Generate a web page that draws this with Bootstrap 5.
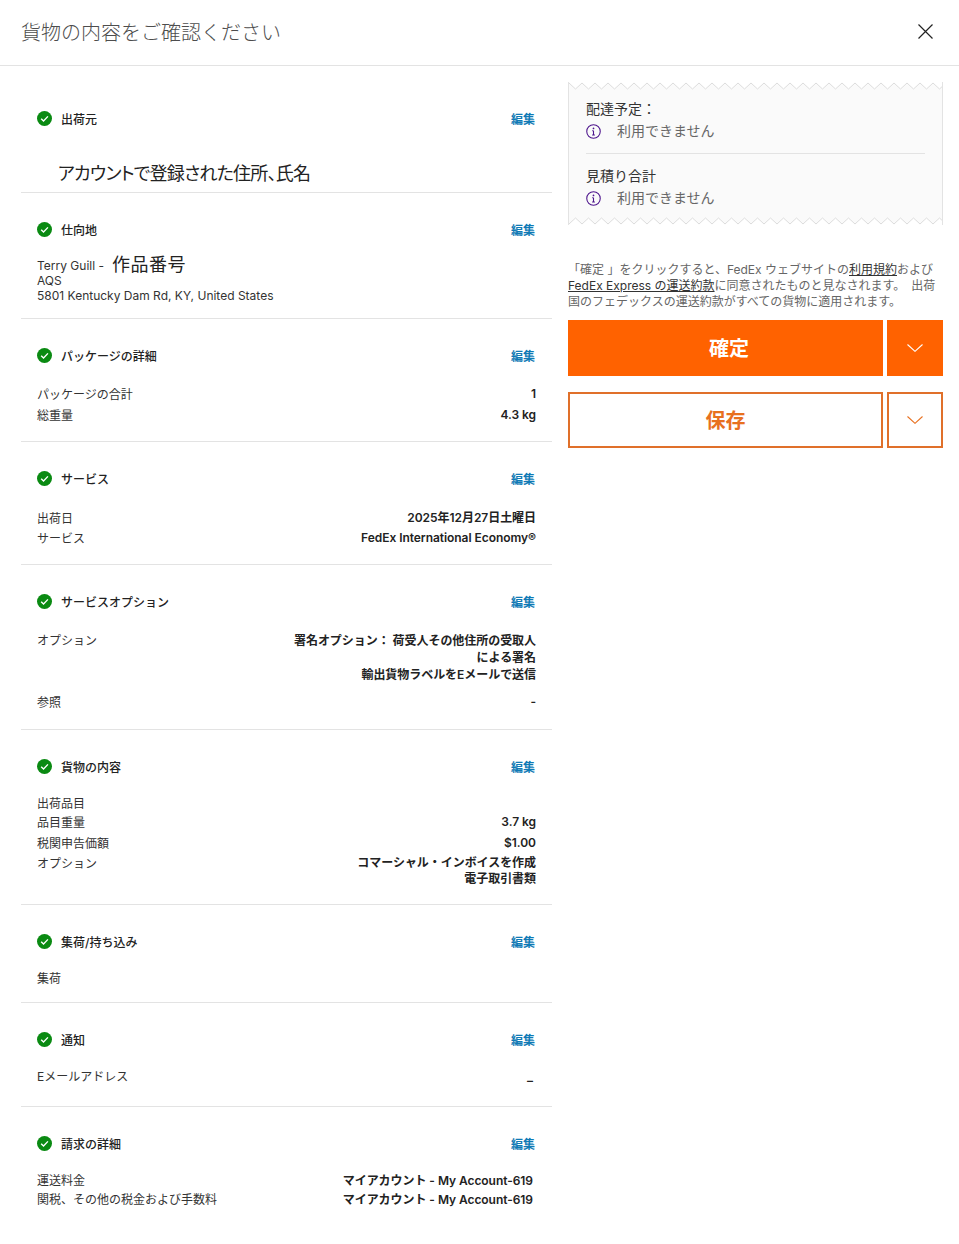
<!DOCTYPE html>
<html lang="ja">
<head>
<meta charset="utf-8">
<title>貨物の内容をご確認ください</title>
<link href="https://cdn.jsdelivr.net/npm/bootstrap@5.3.0/dist/css/bootstrap.min.css" rel="stylesheet">
<style>
body{font-family:Inter,"Noto Sans CJK JP",sans-serif;font-size:12px;color:#333;background:#fff;overflow:hidden}
.hdr{height:66px;padding:0 21px;border-bottom:1px solid #e3e3e3}
.hdr-title{font-size:20px;font-weight:300;color:#4d4d4d;line-height:28px;margin:0;padding-top:1px}
.x-btn{background:none;border:0;padding:0;line-height:0;margin-right:4px;margin-bottom:3px}
.main-wrap{padding:0 16px 0 21px;gap:16px}
.left-col{width:531px;flex:none}
.right-col{width:375px;flex:none;padding-top:16px}
.sec{border-bottom:1px solid #e3e3e3;padding:28px 16px 0}
.sec:first-child{padding-top:44px}
.sec:last-child{border-bottom:0}
.sec-head{height:20px;font-weight:500;color:#222;line-height:20px}
.chk{margin-top:-4px;margin-left:0;margin-right:9px}
.edit-link{color:#0f7ab5;font-weight:700;text-decoration:none;margin-right:1px}
.lbl{color:#333}
.val{color:#222;font-weight:600;text-align:right;letter-spacing:-.05px}
.rw{line-height:20px;min-height:20px}
.rw>.val{margin-top:-1px}
.rw>.val-flat{margin-top:0;padding-right:3px}
.rw2{margin-top:1px}
.rw-s{min-height:19px;height:19px}
.multi{line-height:17px;padding-top:1px}
.multi2{line-height:16px;padding-top:1px}
.note-big{font-family:"Noto Sans CJK JP",sans-serif;font-size:18px;line-height:24px;color:#222;font-weight:400;font-feature-settings:"palt";letter-spacing:-.75px}
.addr{font-size:12px;line-height:15px;color:#333}
.ov{font-family:"Noto Sans CJK JP",sans-serif;font-size:18px;letter-spacing:.5px;color:#222;line-height:15px;margin-left:8px;position:relative;top:1px}
.s1{height:127px}.s2{height:126px}.s3{height:123px}.s4{height:123px}.s5{height:165px}.s6{height:175px}.s7{height:98px}.s8{height:104px}
.b1{padding-top:12px;padding-left:21px}
.mt-a{margin-top:14px}.mt-b{margin-top:18px}.mt-c{margin-top:19px}.mt-d{margin-top:10px}.mt-e{margin-top:16px}
.receipt{background:#fafafa;border-left:1px solid #e3e3e3;border-right:1px solid #e3e3e3;width:375px}
.zig{display:block;width:373px;height:8px;background:#fafafa}
.rc-body{padding:8px 17px 8px}
.rc-h{font-size:14px;line-height:22px;color:#333}
.rc-v{font-size:14px;line-height:22px;color:#666;gap:16px}
.rc-hr{border-top:1px solid #e3e3e3;margin:11px 0 11px}
.terms{font-size:12px;line-height:16px;color:#666;margin:37px 0 10px}
.terms a{color:#333}
.act{gap:4px;height:56px}
.act+.act{margin-top:16px}
.btn-go,.btn-go-s{background:#ff6200;border:0;border-radius:0;color:#fff;font-weight:700;font-size:20px;height:56px;padding:0;line-height:1}
.btn-go{flex:1 1 auto;padding-left:7px;padding-top:1px}
.btn-go-s{width:56px;flex:none}
.btn-sv,.btn-sv-s{background:#fff;border:2px solid #e0702a;border-radius:0;color:#e8701f;font-weight:700;font-size:20px;height:56px;padding:0;line-height:1}
.btn-sv{flex:1 1 auto;padding-top:2px}
.btn-sv-s{width:56px;flex:none}
.btn-go:hover,.btn-go-s:hover{background:#ff6200;color:#fff}
.btn-sv:hover,.btn-sv-s:hover{background:#fff;color:#e8701f;border-color:#e0702a}
</style>
</head>
<body>
<svg width="0" height="0" class="position-absolute">
  <defs>
    <symbol id="ck" viewBox="0 0 14 14"><circle cx="7" cy="7" r="7" fill="#0a8a12"/><path d="M3.9 7.2 6.1 9.3 10.2 5" fill="none" stroke="#fff" stroke-width="1.3"/></symbol>
    <symbol id="inf" viewBox="0 0 14 14"><circle cx="7" cy="7" r="6.3" fill="none" stroke="#4d148c" stroke-width="1"/><path d="M7 6.2V10M5.8 6.3H7M5.7 10.2H8.3" fill="none" stroke="#4d148c" stroke-width="1"/><circle cx="7" cy="4.1" r=".8" fill="#4d148c"/></symbol>
    <symbol id="chv" viewBox="0 0 16 8"><path d="M.5.5 8 7.3 15.5.5" fill="none" stroke="currentColor" stroke-width="1.1"/></symbol>
    <pattern id="zigT" width="13" height="8" patternUnits="userSpaceOnUse"><path d="M0 0H13V1L6.5 7 0 1Z" fill="#fff"/><path d="M0 1 6.5 7 13 1" fill="none" stroke="#dcdcdc"/></pattern>
    <pattern id="zigB" width="13" height="8" patternUnits="userSpaceOnUse"><path d="M0 8H13V7L6.5 1 0 7Z" fill="#fff"/><path d="M0 7 6.5 1 13 7" fill="none" stroke="#dcdcdc"/></pattern>
  </defs>
</svg>
<header class="hdr d-flex align-items-center justify-content-between">
  <h1 class="hdr-title">貨物の内容をご確認ください</h1>
  <button class="x-btn" aria-label="閉じる" type="button"><svg width="17" height="17" viewBox="0 0 17 17"><path d="M1.5 1.5 15.5 15.5M15.5 1.5 1.5 15.5" stroke="#222" stroke-width="1.2" fill="none"/></svg></button>
</header>
<div class="main-wrap d-flex align-items-start">
  <div class="left-col">
    <section class="sec s1">
      <div class="sec-head d-flex align-items-center"><svg class="chk" width="15" height="15"><use href="#ck"/></svg><span>出荷元</span><a class="edit-link ms-auto" href="#">編集</a></div>
      <div class="note-big b1 mt-b">アカウントで登録された住所、氏名</div>
    </section>
    <section class="sec s2">
      <div class="sec-head d-flex align-items-center"><svg class="chk" width="15" height="15"><use href="#ck"/></svg><span>仕向地</span><a class="edit-link ms-auto" href="#">編集</a></div>
      <div class="addr mt-a">
        <div>Terry Guill -<span class="ov">作品番号</span></div>
        <div>AQS</div>
        <div>5801 Kentucky Dam Rd, KY, United States</div>
      </div>
    </section>
    <section class="sec s3">
      <div class="sec-head d-flex align-items-center"><svg class="chk" width="15" height="15"><use href="#ck"/></svg><span>パッケージの詳細</span><a class="edit-link ms-auto" href="#">編集</a></div>
      <div class="mt-b">
        <div class="rw d-flex justify-content-between"><span class="lbl">パッケージの合計</span><span class="val">1</span></div>
        <div class="rw rw2 d-flex justify-content-between"><span class="lbl">総重量</span><span class="val">4.3 kg</span></div>
      </div>
    </section>
    <section class="sec s4">
      <div class="sec-head d-flex align-items-center"><svg class="chk" width="15" height="15"><use href="#ck"/></svg><span>サービス</span><a class="edit-link ms-auto" href="#">編集</a></div>
      <div class="mt-c">
        <div class="rw d-flex justify-content-between"><span class="lbl">出荷日</span><span class="val">2025年12月27日土曜日</span></div>
        <div class="rw d-flex justify-content-between"><span class="lbl">サービス</span><span class="val">FedEx International Economy®</span></div>
      </div>
    </section>
    <section class="sec s5">
      <div class="sec-head d-flex align-items-center"><svg class="chk" width="15" height="15"><use href="#ck"/></svg><span>サービスオプション</span><a class="edit-link ms-auto" href="#">編集</a></div>
      <div class="mt-b">
        <div class="d-flex justify-content-between"><span class="lbl rw">オプション</span><div class="val multi">署名オプション： 荷受人その他住所の受取人<br>による署名<br>輸出貨物ラベルをEメールで送信</div></div>
        <div class="rw d-flex justify-content-between mt-d"><span class="lbl">参照</span><span class="val">-</span></div>
      </div>
    </section>
    <section class="sec s6">
      <div class="sec-head d-flex align-items-center"><svg class="chk" width="15" height="15"><use href="#ck"/></svg><span>貨物の内容</span><a class="edit-link ms-auto" href="#">編集</a></div>
      <div class="mt-e">
        <div class="rw rw-s"><span class="lbl">出荷品目</span></div>
        <div class="rw d-flex justify-content-between"><span class="lbl">品目重量</span><span class="val">3.7 kg</span></div>
        <div class="rw rw2 d-flex justify-content-between"><span class="lbl">税関申告価額</span><span class="val">$1.00</span></div>
        <div class="d-flex justify-content-between"><span class="lbl rw">オプション</span><div class="val multi2">コマーシャル・インボイスを作成<br>電子取引書類</div></div>
      </div>
    </section>
    <section class="sec s7">
      <div class="sec-head d-flex align-items-center"><svg class="chk" width="15" height="15"><use href="#ck"/></svg><span>集荷/持ち込み</span><a class="edit-link ms-auto" href="#">編集</a></div>
      <div class="rw mt-e"><span class="lbl">集荷</span></div>
    </section>
    <section class="sec s8">
      <div class="sec-head d-flex align-items-center"><svg class="chk" width="15" height="15"><use href="#ck"/></svg><span>通知</span><a class="edit-link ms-auto" href="#">編集</a></div>
      <div class="rw mt-e d-flex justify-content-between"><span class="lbl">Eメールアドレス</span><span class="val val-flat mt-1">–</span></div>
    </section>
    <section class="sec">
      <div class="sec-head d-flex align-items-center"><svg class="chk" width="15" height="15"><use href="#ck"/></svg><span>請求の詳細</span><a class="edit-link ms-auto" href="#">編集</a></div>
      <div class="mt-e">
        <div class="rw rw-s d-flex justify-content-between"><span class="lbl">運送料金</span><span class="val val-flat">マイアカウント - My Account-619</span></div>
        <div class="rw d-flex justify-content-between"><span class="lbl">関税、その他の税金および手数料</span><span class="val val-flat">マイアカウント - My Account-619</span></div>
      </div>
    </section>
  </div>
  <aside class="right-col">
    <div class="receipt">
      <svg class="zig"><rect width="375" height="8" fill="url(#zigT)"/></svg>
      <div class="rc-body">
        <div class="rc-h">配達予定：</div>
        <div class="rc-v d-flex align-items-center"><svg width="15" height="15"><use href="#inf"/></svg><span>利用できません</span></div>
        <div class="rc-hr"></div>
        <div class="rc-h">見積り合計</div>
        <div class="rc-v d-flex align-items-center"><svg width="15" height="15"><use href="#inf"/></svg><span>利用できません</span></div>
      </div>
      <svg class="zig"><rect width="375" height="8" fill="url(#zigB)"/></svg>
    </div>
    <p class="terms">「確定 」をクリックすると、FedEx ウェブサイトの<a href="#">利用規約</a>および<a href="#">FedEx Express の運送約款</a>に同意されたものと見なされます。　出荷国のフェデックスの運送約款がすべての貨物に適用されます。</p>
    <div class="act d-flex">
      <button class="btn btn-go" type="button">確定</button>
      <button class="btn btn-go-s" type="button" aria-label="展開"><svg class="d-block mx-auto" width="16" height="8"><use href="#chv"/></svg></button>
    </div>
    <div class="act d-flex">
      <button class="btn btn-sv" type="button">保存</button>
      <button class="btn btn-sv-s" type="button" aria-label="展開"><svg class="d-block mx-auto" width="16" height="8"><use href="#chv"/></svg></button>
    </div>
  </aside>
</div>
<script src="https://cdn.jsdelivr.net/npm/bootstrap@5.3.0/dist/js/bootstrap.bundle.min.js"></script>
</body>
</html>
